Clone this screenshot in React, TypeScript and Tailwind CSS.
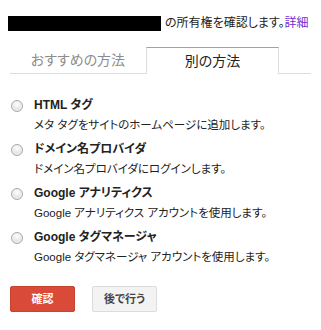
const font = "font-['Liberation_Sans','Noto_Sans_CJK_JP',sans-serif]"

const methods = [
  { title: "HTML タグ", desc: "メタ タグをサイトのホームページに追加します。" },
  { title: "ドメイン名プロバイダ", desc: "ドメイン名プロバイダにログインします。" },
  { title: "Google アナリティクス", desc: "Google アナリティクス アカウントを使用します。" },
  { title: "Google タグマネージャ", desc: "Google タグマネージャ アカウントを使用します。" },
]

const Radio = () => (
  <span className="mt-[5px] ml-[1px] h-[12px] w-[12px] shrink-0 rounded-full border border-[#a9a9a9] bg-[radial-gradient(circle_at_50%_35%,#ffffff_0%,#e6e6e6_55%,#cfcfcf_100%)] shadow-[inset_0_0_0_1px_#f4f4f4]" />
)

const App = () => {
  return (
    <div className={`${font} w-[321px] h-[330px] bg-white px-[10px] pt-[15px] text-[#222] [font-feature-settings:'palt']`}>
      <div className="flex items-center h-[17px] text-[12px] leading-[17px]">
        <span className="-ml-[2px] h-[15px] w-[153px] bg-black" />
        <span className="ml-[4px]">の所有権を確認します。</span>
        <a className="text-[#6b2fd6]">詳細</a>
      </div>

      <div className="mt-[15px] flex h-[27px] border-b border-[#dddddd] text-[14px]">
        <div className="flex w-[136px] items-center justify-center text-[#8c8c8c]">おすすめの方法</div>
        <div className="-mb-px flex w-[133px] items-center justify-center border-x border-t border-x-[#dddddd] border-t-[#dd8a82] bg-white text-[#222]">
          別の方法
        </div>
      </div>

      <div className="mt-[21px] flex flex-col gap-[4px]">
        {methods.map((m) => (
          <label key={m.title} className="flex gap-[11px]">
            <Radio />
            <div className="flex flex-col leading-[20px]">
              <span className="text-[12px] font-bold">{m.title}</span>
              <span className="text-[11.5px]">{m.desc}</span>
            </div>
          </label>
        ))}
      </div>

      <div className="mt-[19px] flex gap-[17px] text-[11px] font-bold">
        <button className="h-[26px] w-[65px] rounded-[2px] border border-[#c6432f] bg-[#d94b38] text-white">確認</button>
        <button className="h-[26px] w-[65px] rounded-[2px] border border-[#dcdcdc] bg-[#f3f3f3] text-[#444]">後で行う</button>
      </div>
    </div>
  )
}

export default App
